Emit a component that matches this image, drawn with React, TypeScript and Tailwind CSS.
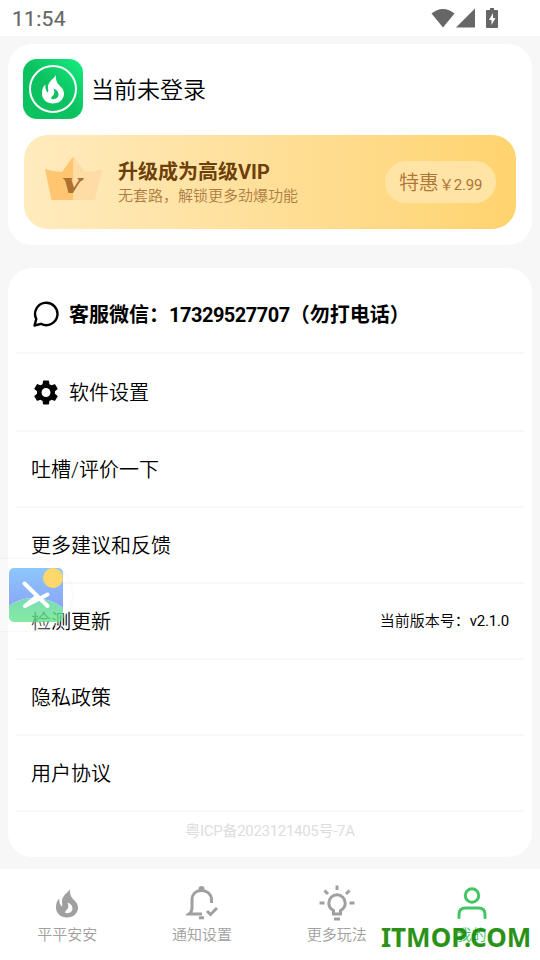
import React from "react";

type IconProps = { className?: string };

function Flame({ className }: IconProps) {
  return (
    <svg viewBox="0 0 22 29" className={className} fill="currentColor">
      <path
        fillRule="evenodd"
        d="M14 0C13.500 4 14.500 7.500 17.500 10.500C20.500 13.500 22 15.500 22 18.500C22 24.500 17.300 28.500 11 28.500C4.700 28.500 0 24.500 0 18.500C0 14.500 1 11.500 3.500 9.500C3 12.500 3.500 15 5.500 17.500C6.500 17 6.500 15.500 6 13.500C5.500 10 7 7.500 9.500 5C11.500 3.200 13 2 14 0ZM11.500 13.500C13 17 12.500 19.500 10.500 21C9.500 22 8.800 23 9.300 23.800C12.500 25 16.500 23 16.500 19.500C16.500 16.500 14.500 14.500 11.500 13.500Z"
      />
    </svg>
  );
}

function StatusBar() {
  return (
    <div className="flex h-9 items-center justify-between bg-white pl-3 pr-[42px] text-[#666]">
      <span className="pt-0.5 font-[Roboto] text-[21px] font-normal leading-none tracking-[0.3px] [-webkit-text-stroke:0.2px_#666]">
        11:54
      </span>
      <div className="mb-px flex items-center">
        <svg viewBox="0 0 24 20" className="h-5 w-6" fill="currentColor">
          <path d="M.5 5.600C7-.7 17-.7 23.500 5.600L12 19.500Z" />
        </svg>
        <svg viewBox="0 0 20 20" className="h-5 w-5" fill="currentColor">
          <path d="M20 .5V19.500H1Z" />
        </svg>
        <svg viewBox="0 0 12 20" className="ml-[11px] h-5 w-3" fill="currentColor">
          <path
            fillRule="evenodd"
            d="M4 0H8V2H11Q12 2 12 3V19Q12 20 11 20H1Q0 20 0 19V3Q0 2 1 2H4ZM7 5L3 12H5.500V17L9.500 10H7Z"
          />
        </svg>
      </div>
    </div>
  );
}

function AppLogo() {
  return (
    <div className="flex size-[60px] items-center justify-center rounded-[14px] bg-linear-to-tr from-[#0bc160] from-50% to-[#15ee80]">
      <div className="flex size-12 items-center justify-center rounded-full border-2 border-white">
        <Flame className="h-[29px] w-[22px] text-white" />
      </div>
    </div>
  );
}

function Crown() {
  return (
    <svg viewBox="0 0 57 44" className="h-11 w-[57px]">
      <path d="M28.500 0L27 1L17 15Q8 15 0 12L6.500 43H28.500Z" fill="#ffc570" />
      <path d="M28.500 0L30 1L40 15Q49 15 57 12L50 43H28.500Z" fill="#ffdca6" />
      <path
        d="M17.500 21H27.500L26.500 23L29 30.500L34 23L32 21H39L38 23Q35 24 33.500 27L28 36H23.500L20.500 24.500Q20 22.500 17.500 21Z"
        fill="#ae7131"
      />
    </svg>
  );
}

function VipBanner() {
  return (
    <div className="mt-4 flex h-[94px] items-center rounded-[24px] bg-linear-to-r from-[#ffebbe] to-[#ffd36d] pl-[21px] pr-5">
      <div className="-mt-1.5">
        <Crown />
      </div>
      <div className="ml-4 flex-1 pt-0.5">
        <div className="text-[20px] font-bold leading-[26px] text-[#6d400b]">升级成为高级VIP</div>
        <div className="text-[15px] leading-[23px] text-[#ae7c42]">无套路，解锁更多劲爆功能</div>
      </div>
      <div className="flex h-[42px] w-[111px] items-center justify-center whitespace-nowrap rounded-full bg-[#ffe4a6] pt-0.5 text-[#ae7538]">
        <span className="text-[20px]">特惠</span>
        <span className="pt-1 text-[15px] font-normal tracking-[-0.2px]">￥2.99</span>
      </div>
    </div>
  );
}

function ChatIcon() {
  return (
    <svg viewBox="0 0 26 26" className="h-[26px] w-[26px]" fill="none" stroke="#000" strokeWidth="2.400" strokeLinejoin="round">
      <path d="M1.500 24.500L3.300 18A11.200 11.200 0 1 1 8 22.800Z" />
    </svg>
  );
}

function GearIcon() {
  return (
    <svg viewBox="2 2 20 20" className="h-[25px] w-[26px]" fill="#000">
      <path d="M19.140 12.940c.04-.3.060-.61.060-.94 0-.32-.02-.64-.07-.94l2.030-1.580c.18-.14.230-.41.120-.61l-1.920-3.320c-.12-.22-.37-.29-.59-.22l-2.390.96c-.5-.38-1.030-.7-1.620-.94l-.36-2.540c-.04-.24-.24-.41-.48-.41h-3.840c-.24 0-.43.170-.47.410l-.36 2.540c-.59.240-1.130.570-1.620.940l-2.390-.96c-.22-.08-.47 0-.59.220L2.740 8.870c-.12.210-.08.470.120.610l2.030 1.580c-.05.300-.09.630-.09.940s.02.640.070.940l-2.030 1.580c-.18.140-.23.410-.12.610l1.920 3.320c.12.220.37.290.59.220l2.390-.96c.5.380 1.030.700 1.620.940l.36 2.540c.05.240.24.410.48.410h3.840c.24 0 .44-.17.470-.41l.36-2.540c.59-.24 1.130-.56 1.620-.94l2.390.96c.22.080.47 0 .59-.22l1.920-3.320c.12-.22.070-.47-.12-.61l-2.010-1.580zM12 15.600c-1.980 0-3.600-1.620-3.600-3.600s1.620-3.600 3.600-3.600 3.600 1.620 3.600 3.600-1.620 3.600-3.600 3.600z" />
    </svg>
  );
}

const links = ["吐槽/评价一下", "更多建议和反馈", "检测更新", "隐私政策", "用户协议"];

function Menu() {
  return (
    <div className="mx-2 mt-[23px] h-[589px] rounded-[24px] bg-white px-2 pt-2 text-[20px] text-black">
      <div className="flex h-[78px] items-center border-b-2 border-[#f7f7f7] pl-[17px]">
        <ChatIcon />
        <span className="ml-2.5 pt-0.5 font-bold">
          客服微信：<span className="tracking-[-0.5px]">17329527707</span>（勿打电话）
        </span>
      </div>
      <div className="flex h-[78px] items-center border-b-2 border-[#f7f7f7] pl-[17px]">
        <GearIcon />
        <span className="ml-2.5 pt-0.5">软件设置</span>
      </div>
      {links.map((label) => (
        <div key={label} className="flex h-[76px] items-center justify-between border-b-2 border-[#f7f7f7] px-[15px]">
          <span className="pt-0.5">{label}</span>
          {label === "检测更新" && (
            <span className="text-[15px]">
              当前版本号：<span className="font-normal tracking-[-0.2px]">v2.1.0</span>
            </span>
          )}
        </div>
      ))}
      <div className="pt-2 text-center text-[15px] font-normal leading-[22px] tracking-[-0.3px] text-[#ddd]">
        粤ICP备2023121405号-7A
      </div>
    </div>
  );
}

function FloatingButton() {
  return (
    <div className="absolute left-0 top-[559px] flex h-[72px] w-[72px] items-center rounded-r-[36px] bg-white/30 pl-[9px] shadow-[0_0_3px_rgba(0,0,0,0.08)]">
      <svg viewBox="0 0 54 54" className="size-[54px]">
        <defs>
          <linearGradient id="sky" x1="0" y1="0" x2="0" y2="1">
            <stop offset="0" stopColor="#67b5fc" />
            <stop offset="1" stopColor="#6386f6" />
          </linearGradient>
          <linearGradient id="hill" x1="0" y1="0" x2="0" y2="1">
            <stop offset="0" stopColor="#50d09e" />
            <stop offset="1" stopColor="#5ae480" />
          </linearGradient>
          <clipPath id="tile">
            <rect width="54" height="54" rx="5" />
          </clipPath>
        </defs>
        <g clipPath="url(#tile)" opacity="0.75">
          <path d="M0 0H54V40C37 27 14 27 0 38Z" fill="url(#sky)" />
          <path d="M0 38C14 27 37 27 54 40V54H0Z" fill="url(#hill)" />
        </g>
        <circle cx="44" cy="10" r="10" fill="#ffd86c" />
        <path d="M15.500 15.500L38.500 38M38.500 26.500L16 38L27 29" fill="none" stroke="#fff" strokeWidth="4" strokeLinecap="round" strokeLinejoin="round" />
      </svg>
    </div>
  );
}

function BellIcon() {
  return (
    <svg viewBox="0 0 32 34" className="h-[34px] w-8" fill="none" stroke="currentColor" strokeWidth="3">
      <path d="M16 28H3Q6 26 6 22V14C6 8 10 4.500 15.500 4.500S25.500 8 25.500 14V17" />
      <path d="M21 25L24.500 28.500L31 22" />
      <path d="M13 31.800H18" />
      <circle cx="15.500" cy="3" r="1.500" />
    </svg>
  );
}

function BulbIcon() {
  return (
    <svg viewBox="0 0 36 36" className="h-9 w-9" fill="none" stroke="currentColor" strokeWidth="3">
      <path d="M14.500 29V25.500C11.500 24 9.800 21.500 9.800 18A8.200 8.200 0 0 1 26.200 18C26.200 21.500 24.500 24 21.500 25.500V29Z" />
      <path d="M15 34H21M18 .5V5M.5 18H5.500M30.500 18H35.500M5.500 5.500L9 9M30.500 5.500L27 9" />
    </svg>
  );
}

function UserIcon() {
  return (
    <svg viewBox="0 0 30 33" className="h-[33px] w-[30px]" fill="none" stroke="currentColor" strokeWidth="3" strokeLinecap="round">
      <circle cx="15" cy="8.500" r="6.700" />
      <path d="M2 30.500V27.500Q2 21 8.500 21H21.500Q28 21 28 27.500V30.500" />
    </svg>
  );
}

const tabs = [
  { label: "平平安安", icon: <Flame className="h-[29px] w-[22px]" /> },
  { label: "通知设置", icon: <BellIcon /> },
  { label: "更多玩法", icon: <BulbIcon /> },
  { label: "我的", icon: <UserIcon />, active: true },
];

function TabBar() {
  return (
    <div className="mt-3 grid h-[91px] grid-cols-4 bg-white pr-px pt-4">
      {tabs.map((tab) => (
        <div
          key={tab.label}
          className={tab.active ? "flex flex-col items-center text-[#42c566]" : "flex flex-col items-center text-[#a0a0a0]"}
        >
          <div className="flex h-9 items-center">{tab.icon}</div>
          <span className="mt-[3px] text-[15px] leading-[22px]">{tab.label}</span>
        </div>
      ))}
    </div>
  );
}

function App() {
  return (
    <div className="relative h-[960px] w-[540px] overflow-hidden bg-[#f7f7f7] font-[Roboto,'Noto_Sans_CJK_SC',sans-serif] font-[350]">
      <StatusBar />
      <div className="mx-2 mt-2 h-[201px] rounded-[24px] bg-white px-4 pt-[15px]">
        <div className="-ml-px flex items-center">
          <AppLogo />
          <span className="ml-2 pt-1 text-[23px] text-black">当前未登录</span>
        </div>
        <VipBanner />
      </div>
      <Menu />
      <TabBar />
      <FloatingButton />
      <div className="absolute left-[381px] top-[920px] font-['Noto_Sans'] text-[26px] font-bold leading-[34px] text-[#128700]/90">
        ITMOP.COM
      </div>
    </div>
  );
}

export default App;
